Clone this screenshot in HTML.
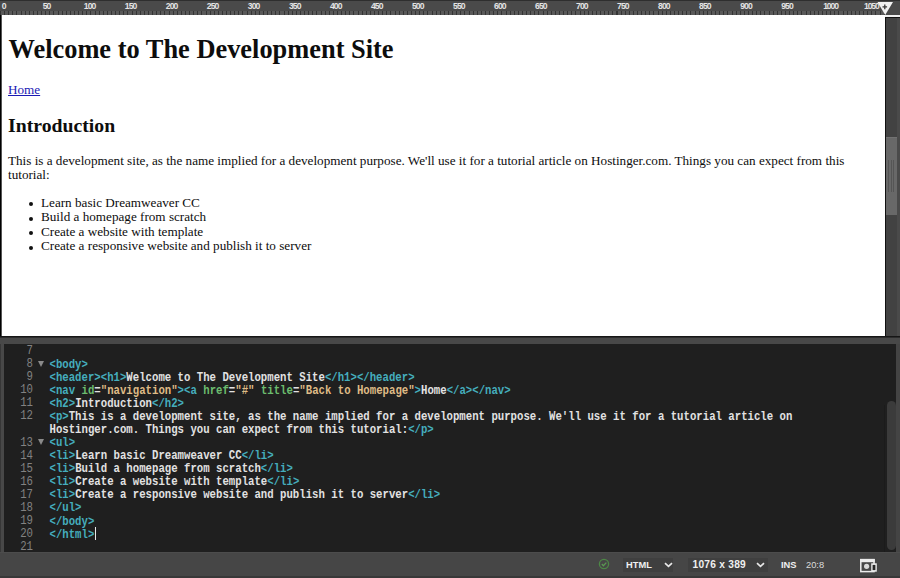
<!DOCTYPE html>
<html><head><meta charset="utf-8">
<style>
*{margin:0;padding:0;box-sizing:border-box}
html,body{width:900px;height:578px;overflow:hidden;background:#444}
body{position:relative;font-family:"Liberation Sans",sans-serif}
.abs{position:absolute}
#ruler{left:0;top:0;width:900px;height:15px;background:#4a4a4a;border-top:1px solid #2e2e2e}
#ticks{left:0;top:10.5px;width:885px;height:4.5px;background:repeating-linear-gradient(90deg,#343434 0,#343434 1px,#595959 1px,#595959 4.11px)}
#rl span{position:absolute;top:1px;font-size:8.6px;line-height:10px;color:#e4e4e4;letter-spacing:-0.9px;font-weight:bold}
#design{left:0;top:15px;width:885px;height:321px;background:#fff;border-left:1px solid #000;box-shadow:inset 1px 0 0 #555}
#dscroll{left:885px;top:15px;width:15px;height:321px;background:#424242;border-left:1px solid #111}
#dthumb{left:886px;top:137px;width:11px;height:78px;background:#686868;border-top:1px solid #727272}
#grip{left:888px;top:160px;width:7px;height:32px;background:repeating-linear-gradient(90deg,#555 0,#555 1px,transparent 1px,transparent 2.5px)}
.serif{font-family:"Liberation Serif",serif;color:#0d0d0d;white-space:nowrap}
.bul{left:28.6px;width:4px;height:4px;border-radius:50%;background:#111}
#split{left:0;top:336px;width:900px;height:8px;background:#484848;border-top:1px solid #161616;box-shadow:inset 0 1px 0 #2c2c2c}
#code{left:4px;top:344px;width:892px;height:208px;background:#1f1f1f}
#cthumb{left:886.5px;top:400.5px;width:9.5px;height:149.5px;background:#3b3b3b;border-radius:5px}
#status{left:0;top:552px;width:900px;height:26px;background:#464646;border-bottom:2px solid #383838;border-top:1px solid #4c4c4c}
.mono{font-family:"Liberation Mono",monospace;font-size:10.68px;line-height:13.08px;white-space:pre;color:#e2e2e2;font-weight:bold}
.ln{color:#828282;text-align:right;font-weight:normal;transform:scaleY(1.12);transform-origin:0 9.4px}
.l{height:13.08px;transform:scaleY(1.18);transform-origin:0 9.4px}
.t{color:#45adbd}
.an{color:#6cbc6e}
.av{color:#dfbb86}
.fold{left:38px;width:0;height:0;border-left:3.5px solid transparent;border-right:3.5px solid transparent;border-top:6px solid #8a8a8a}
.sb{font-size:9.3px;font-weight:bold;color:#f0f0f0;line-height:12px}
.dd{background:#3f3f3f;height:14px;top:558px}
.chev{width:4px;height:4px;border-right:2px solid #e6e6e6;border-bottom:2px solid #e6e6e6;transform:rotate(45deg)}
</style></head><body>
<div id="ruler" class="abs"></div>
<div id="ticks" class="abs"></div>
<div id="rl" class="abs" style="left:0;top:0;width:885px;height:11px"><span style="left:1.7px">0</span><span style="left:42.7px">50</span><span style="left:83.8px">100</span><span style="left:124.8px">150</span><span style="left:165.8px">200</span><span style="left:206.8px">250</span><span style="left:247.8px">300</span><span style="left:288.9px">350</span><span style="left:329.9px">400</span><span style="left:370.9px">450</span><span style="left:411.9px">500</span><span style="left:453.0px">550</span><span style="left:494.0px">600</span><span style="left:535.0px">650</span><span style="left:576.1px">700</span><span style="left:617.1px">750</span><span style="left:658.1px">800</span><span style="left:699.1px">850</span><span style="left:740.2px">900</span><span style="left:781.2px">950</span><span style="left:823.2px;letter-spacing:-1.1px">1000</span><span style="left:864.0px;letter-spacing:-1.1px">1050</span></div>
<svg class="abs" style="left:877px;top:1px" width="17" height="15" viewBox="0 0 17 15"><path d="M0.5 1 L16 1 L8.2 14 Z" fill="#f2f2f2"/><path d="M7.8 3.6v4.6M5.5 5.9h4.6" stroke="#3a3a3a" stroke-width="1.3"/></svg>
<div id="design" class="abs"></div>
<div id="dscroll" class="abs"></div>
<div class="abs" style="left:885px;top:15px;width:15px;height:2px;background:#f0f0f0"></div>
<div class="abs" style="left:885px;top:17px;width:15px;height:1px;background:#111"></div>
<div class="abs" style="left:897px;top:18px;width:3px;height:318px;background:#4a4a4a"></div>
<div id="dthumb" class="abs"></div>
<div id="grip" class="abs"></div>

<div class="abs serif" style="left:8.5px;top:34px;font-weight:bold;font-size:26.4px;line-height:30px">Welcome to The Development Site</div>
<div class="abs serif" style="left:8px;top:83px;font-size:13.16px;line-height:14.6px;color:#1a1ab4;text-decoration:underline;text-decoration-thickness:1px;text-underline-offset:0.6px">Home</div>
<div class="abs serif" style="left:8px;top:114.3px;font-weight:bold;font-size:19.74px;line-height:22px">Introduction</div>
<div class="abs serif" style="left:8px;top:153.5px;font-size:13.16px;line-height:14.6px">This is a development site, as the name implied for a development purpose. We'll use it for a tutorial article on Hostinger.com. Things you can expect from this<br>tutorial:</div>
<div class="abs serif" style="left:41px;top:195.7px;font-size:13.16px;line-height:14.6px">Learn basic Dreamweaver CC<br>Build a homepage from scratch<br>Create a website with template<br>Create a responsive website and publish it to server</div>
<div class="abs bul" style="top:202px"></div>
<div class="abs bul" style="top:216.6px"></div>
<div class="abs bul" style="top:231.2px"></div>
<div class="abs bul" style="top:245.8px"></div>

<div id="split" class="abs"></div>
<div id="code" class="abs"></div>
<div class="abs" style="left:0;top:344px;width:4px;height:208px;background:#484848;border-left:1px solid #373737"></div>
<div class="abs" style="left:884px;top:405px;width:1px;height:147px;background:#1b1b1b"></div>
<div id="cthumb" class="abs"></div>

<div class="abs" id="lns" style="left:1px;top:345px;width:32px">
<div class="mono ln" style="height:13.08px">7</div>
<div class="mono ln" style="height:13.08px">8</div>
<div class="mono ln" style="height:13.08px">9</div>
<div class="mono ln" style="height:13.08px">10</div>
<div class="mono ln" style="height:13.08px">11</div>
<div class="mono ln" style="height:13.08px">12</div>
<div class="mono ln" style="height:13.08px"></div>
<div class="mono ln" style="height:13.08px">13</div>
<div class="mono ln" style="height:13.08px">14</div>
<div class="mono ln" style="height:13.08px">15</div>
<div class="mono ln" style="height:13.08px">16</div>
<div class="mono ln" style="height:13.08px">17</div>
<div class="mono ln" style="height:13.08px">18</div>
<div class="mono ln" style="height:13.08px">19</div>
<div class="mono ln" style="height:13.08px">20</div>
<div class="mono ln" style="height:13.08px">21</div>
</div>
<div class="abs fold" style="top:361px"></div>
<div class="abs fold" style="top:439px"></div>
<div class="abs" id="src" style="left:49.5px;top:345.5px">
<div class="mono l"></div>
<div class="mono l"><span class="t">&lt;body&gt;</span></div>
<div class="mono l"><span class="t">&lt;header&gt;&lt;h1&gt;</span>Welcome to The Development Site<span class="t">&lt;/h1&gt;&lt;/header&gt;</span></div>
<div class="mono l"><span class="t">&lt;nav </span><span class="an">id</span>=<span class="av">"navigation"</span><span class="t">&gt;&lt;a </span><span class="an">href</span>=<span class="av">"#"</span> <span class="an">title</span>=<span class="av">"Back to Homepage"</span><span class="t">&gt;</span>Home<span class="t">&lt;/a&gt;&lt;/nav&gt;</span></div>
<div class="mono l"><span class="t">&lt;h2&gt;</span>Introduction<span class="t">&lt;/h2&gt;</span></div>
<div class="mono l"><span class="t">&lt;p&gt;</span>This is a development site, as the name implied for a development purpose. We'll use it for a tutorial article on</div>
<div class="mono l">Hostinger.com. Things you can expect from this tutorial:<span class="t">&lt;/p&gt;</span></div>
<div class="mono l"><span class="t">&lt;ul&gt;</span></div>
<div class="mono l"><span class="t">&lt;li&gt;</span>Learn basic Dreamweaver CC<span class="t">&lt;/li&gt;</span></div>
<div class="mono l"><span class="t">&lt;li&gt;</span>Build a homepage from scratch<span class="t">&lt;/li&gt;</span></div>
<div class="mono l"><span class="t">&lt;li&gt;</span>Create a website with template<span class="t">&lt;/li&gt;</span></div>
<div class="mono l"><span class="t">&lt;li&gt;</span>Create a responsive website and publish it to server<span class="t">&lt;/li&gt;</span></div>
<div class="mono l"><span class="t">&lt;/ul&gt;</span></div>
<div class="mono l"><span class="t">&lt;/body&gt;</span></div>
<div class="mono l"><span class="t">&lt;/html&gt;</span></div>
<div class="mono l"></div>
</div>
<div class="abs" style="left:94.5px;top:527px;width:1.5px;height:13px;background:#e8e8e8"></div>

<div id="status" class="abs"></div>
<svg class="abs" style="left:598px;top:558px" width="12" height="12" viewBox="0 0 12 12"><circle cx="6" cy="6" r="4.6" fill="none" stroke="#4d8746" stroke-width="1.3"/><path d="M3.8 6 L5.4 7.7 L8.3 4.6" fill="none" stroke="#5a9852" stroke-width="1.3"/></svg>
<div class="abs dd" style="left:623px;width:50px"></div>
<div class="abs sb" style="left:626px;top:559px">HTML</div>
<svg class="abs" style="left:663.8px;top:562px" width="9" height="6" viewBox="0 0 9 6"><path d="M1 1.2 L4.5 4.4 L8 1.2" fill="none" stroke="#e8e8e8" stroke-width="1.7"/></svg>
<div class="abs dd" style="left:688px;width:80px"></div>
<div class="abs sb" style="left:692.5px;top:559px;font-size:10.2px;letter-spacing:0.25px">1076 x 389</div>
<svg class="abs" style="left:756.4px;top:562px" width="9" height="6" viewBox="0 0 9 6"><path d="M1 1.2 L4.5 4.4 L8 1.2" fill="none" stroke="#e8e8e8" stroke-width="1.7"/></svg>
<div class="abs sb" style="left:781px;top:559px">INS</div>
<div class="abs sb" style="left:806px;top:559px;font-weight:normal;color:#dcdcdc">20:8</div>
<svg class="abs" style="left:859px;top:558px" width="20" height="16" viewBox="0 0 20 16"><rect x="1.8" y="1.6" width="13.2" height="12" fill="none" stroke="#ececec" stroke-width="1.5"/><rect x="1" y="1" width="14.8" height="3.2" fill="#ececec"/><circle cx="7.6" cy="8.3" r="2.6" fill="#d8d8d8"/><rect x="12.2" y="5.3" width="5.6" height="8.4" fill="#ececec"/><rect x="13.6" y="6.9" width="2.8" height="5.2" fill="#262626"/></svg>
</body></html>
